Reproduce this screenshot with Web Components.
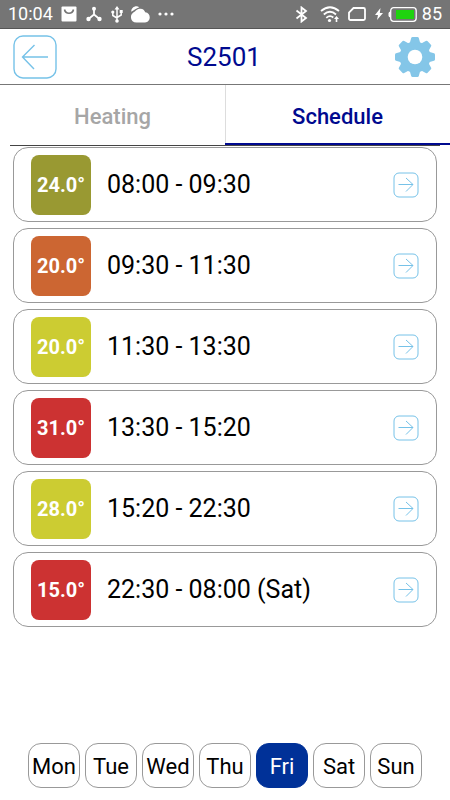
<!DOCTYPE html>
<html lang="en">
<head>
<meta charset="utf-8">
<meta name="viewport" content="width=device-width, initial-scale=1">
<title>S2501</title>
<style>
    html, body{
        height: 100%;
        margin: 0;
    }
    body{
        background: #fff;
        font-family: Roboto, "Liberation Sans", sans-serif;
    }
</style>
</head>
<body>
<thermostat-app></thermostat-app>

<script>
class BaseElement extends HTMLElement{
    constructor(){
        super();
        this.attachShadow({mode: 'open'});
    }
    connectedCallback(){
        const template = document.createElement('template');
        template.innerHTML = this.getStyle() + this.getTemplate();
        this.shadowRoot.replaceChildren(template.content.cloneNode(true));
    }
}

class StatusBar extends BaseElement{
    getTemplate(){
        return `
            <span>10:04</span>
            <svg class="mail" width="16" height="16" viewBox="0 0 16 16">
                <rect x="0.5" y="0.5" width="15" height="15" rx="1" fill="#fff"/>
                <path d="M3.5 3.5C4.5 8.5 11.5 8.5 12.5 3.5" fill="none" stroke="#757575" stroke-width="1.6"/>
            </svg>
            <svg class="node" width="16" height="16" viewBox="0 0 16 16">
                <path d="M8 2v6.500L2.500 13M8 8.500L13.500 13" fill="none" stroke="#fff" stroke-width="1.8"/>
                <circle cx="8" cy="2.800" r="2" fill="#fff"/>
                <circle cx="2.500" cy="13" r="2.200" fill="#fff"/>
                <circle cx="13.500" cy="13" r="2.200" fill="#fff"/>
            </svg>
            <svg class="usb" width="12" height="17" viewBox="0 0 12 17">
                <path d="M6 2v13M1.800 6v3.500L6 12M10.200 5v4L6 11.500" fill="none" stroke="#fff" stroke-width="1.5"/>
                <path d="M6 0l2.500 3.500h-5zM8.700 4h3v3h-3z" fill="#fff"/>
                <circle cx="1.800" cy="6" r="1.600" fill="#fff"/>
                <circle cx="6" cy="15" r="1.800" fill="#fff"/>
            </svg>
            <svg class="cloud" width="19" height="17" viewBox="0 0 19 17">
                <path d="M0.300 5.800C-0.200 2 4.500-1.300 8.300 1.200C5 2.200 3.500 4.200 0.300 5.800z" fill="#fff"/>
                <path d="M5.500 16.500C-0.500 16.500-1.500 9.500 1.800 7C4.500 5.500 5 3.500 8.500 2.800C11.500 2.300 13.500 4 14.200 6.200C20.500 6.800 20 16.500 14 16.500z" fill="#fff"/>
            </svg>
            <svg class="dots" width="18" height="4" viewBox="0 0 18 4">
                <circle cx="2" cy="2" r="1.600" fill="#fff"/>
                <circle cx="8" cy="2" r="1.600" fill="#fff"/>
                <circle cx="14" cy="2" r="1.600" fill="#fff"/>
            </svg>
            <svg class="bluetooth" width="13" height="17" viewBox="0 0 13 17">
                <path d="M1.500 4.500L11 12L6.500 15.500V1.500L11 5L1.500 12.500" fill="none" stroke="#fff" stroke-width="1.8"/>
            </svg>
            <svg class="wifi" width="20" height="17" viewBox="0 0 20 17">
                <path d="M1 5Q10-2.500 19 5M3.800 8.500Q10 3 16 8.500M6.300 11.800Q10 8.500 13.300 11.500" fill="none" stroke="#fff" stroke-width="1.800"/>
                <circle cx="9.500" cy="14.500" r="1.600" fill="#fff"/>
                <path d="M16.500 10l2.500 3h-1.700v3h-1.600v-3H14z" fill="#fff"/>
            </svg>
            <svg class="sim" width="18" height="14" viewBox="0 0 18 14">
                <path d="M5.500 1H15.500Q17 1 17 2.500V11.500Q17 13 15.500 13H2.500Q1 13 1 11.500V5.500z" fill="none" stroke="#fff" stroke-width="1.800"/>
            </svg>
            <svg class="bolt" width="8" height="12" viewBox="0 0 8 12">
                <path d="M5.500 0L0 7h3L2 12L8 5H4.800z" fill="#fff"/>
            </svg>
            <svg class="battery" width="29" height="15" viewBox="0 0 29 15">
                <rect x="2.700" y="0.700" width="25.500" height="13.600" rx="3" fill="none" stroke="#fff" stroke-width="1.300"/>
                <path d="M2.500 4.500Q0.500 4.500 0.500 6.500V8.500Q0.500 10.500 2.500 10.500z" fill="#fff"/>
                <rect x="8" y="3" width="18" height="9" fill="#1fd30f"/>
            </svg>
            <span>85</span>
        `;
    }
    getStyle(){
        return `
            <style>
                :host{
                    display: flex;
                    align-items: center;
                    height: 28px;
                    padding: 0 8px;
                    background: #757575;
                    border-bottom: 1px solid #555;
                    color: #fff;
                    font-size: 18px;
                    line-height: 28px;
                }
                svg{
                    flex: none;
                }
                .mail{ margin-left: 8px; }
                .node{ margin-left: 9px; }
                .usb{ margin-left: 9px; }
                .cloud{ margin-left: 8px; }
                .dots{ margin-left: 8px; }
                .bluetooth{ margin-left: auto; }
                .wifi{ margin-left: 12px; }
                .sim{ margin-left: 8px; }
                .bolt{ margin-left: 9px; }
                .battery{ margin: 0 5px; }
            </style>
        `;
    }
}

class AppHeader extends BaseElement{
    getTemplate(){
        return `
            <header>
                <button type="button" aria-label="Back">
                    <svg width="44" height="44" viewBox="0 0 44 44" fill="none" stroke="#76c2e8" stroke-width="1.400">
                        <rect x="1" y="1" width="42" height="42" rx="9"/>
                        <path d="M35 22H10M21.500 10L9.500 22L21 34"/>
                    </svg>
                </button>
                <h1><slot></slot></h1>
                <button type="button" aria-label="Settings">
                    <svg width="40" height="40" viewBox="-20 -20 40 40">
                        <defs>
                            <path id="tooth" d="M-5.500-13L-3.800-19Q-3.500-20-2.500-20H2.500Q3.500-20 3.800-19L5.500-13z"/>
                        </defs>
                        <g fill="#84c6e8">
                            <circle r="15.500"/>
                            <use href="#tooth"/>
                            <use href="#tooth" transform="rotate(45)"/>
                            <use href="#tooth" transform="rotate(90)"/>
                            <use href="#tooth" transform="rotate(135)"/>
                            <use href="#tooth" transform="rotate(180)"/>
                            <use href="#tooth" transform="rotate(225)"/>
                            <use href="#tooth" transform="rotate(270)"/>
                            <use href="#tooth" transform="rotate(315)"/>
                        </g>
                        <circle r="7.300" fill="#fff"/>
                    </svg>
                </button>
            </header>
        `;
    }
    getStyle(){
        return `
            <style>
                :host{
                    display: block;
                    border-bottom: 1px solid #777;
                }
                header{
                    display: grid;
                    grid-template-columns: 1fr auto 1fr;
                    align-items: center;
                    height: 55px;
                    padding: 0 15px 0 13px;
                }
                h1{
                    margin: 0;
                    color: #000a8f;
                    font-size: 26px;
                    font-weight: 400;
                    line-height: 32px;
                }
                button{
                    justify-self: start;
                    padding: 0;
                    border: 0;
                    background: none;
                }
                button:last-child{
                    justify-self: end;
                }
                svg{
                    display: block;
                }
            </style>
        `;
    }
}

class TabBar extends BaseElement{
    getTemplate(){
        return `
            <nav>
                <button type="button">Heating</button>
                <button type="button" class="active" aria-current="page">Schedule</button>
            </nav>
        `;
    }
    getStyle(){
        return `
            <style>
                :host{
                    display: block;
                }
                nav{
                    display: grid;
                    grid-template-columns: 1fr 1fr;
                }
                button{
                    height: 60px;
                    padding: 6px 0 0;
                    border: 0;
                    border-bottom: 2px solid transparent;
                    background: none;
                    color: #a6a6a6;
                    font: 500 22px/28px Roboto, "Liberation Sans", sans-serif;
                }
                button.active{
                    border-bottom-color: #000a8f;
                    box-shadow: inset 1px 0 #ddd;
                    color: #000a8f;
                }
            </style>
        `;
    }
}

class ScheduleItem extends BaseElement{
    getTemplate(){
        return `
            <strong><slot name="temp"></slot></strong>
            <span><slot name="time"></slot></span>
            <button type="button" aria-label="Edit">
                <svg width="26" height="26" viewBox="0 0 26 26" fill="none" stroke="#76c2e8">
                    <rect x="1" y="1" width="24" height="24" rx="5"/>
                    <path d="M5.500 12.500H20M13 6L20 12.500L13 19.500"/>
                </svg>
            </button>
        `;
    }
    getStyle(){
        return `
            <style>
                :host{
                    --badge-color: #999932;

                    display: flex;
                    align-items: center;
                    gap: 16px;
                    box-sizing: border-box;
                    height: 75px;
                    padding: 0 17px;
                    border: 1px solid #999;
                    border-radius: 15px;
                }
                strong{
                    width: 60px;
                    border-radius: 8px;
                    background: var(--badge-color);
                    color: #fff;
                    font-size: 20px;
                    font-weight: 700;
                    line-height: 60px;
                    text-align: center;
                }
                span{
                    flex: 1;
                    font-size: 25px;
                    line-height: 30px;
                }
                button{
                    padding: 0;
                    border: 0;
                    background: none;
                }
                svg{
                    display: block;
                }
            </style>
        `;
    }
}

class ScheduleList extends BaseElement{
    getTemplate(){
        return `
            <section>
                <slot></slot>
            </section>
        `;
    }
    getStyle(){
        return `
            <style>
                :host{
                    display: block;
                    margin: 0 10px;
                    border-top: 1px solid #444;
                }
                section{
                    display: flex;
                    flex-direction: column;
                    gap: 6px;
                    padding: 1px 3px;
                }
            </style>
        `;
    }
}

class DayPicker extends BaseElement{
    getTemplate(){
        const days = ['Mon', 'Tue', 'Wed', 'Thu', 'Fri', 'Sat', 'Sun'];
        return days.map(day => {
            const selected = day === this.getAttribute('selected');
            return `<button type="button" aria-pressed="${selected}">${day}</button>`;
        }).join('');
    }
    getStyle(){
        return `
            <style>
                :host{
                    display: flex;
                    gap: 5px;
                    padding: 0 28px 12px;
                }
                button{
                    flex: 1 1 0;
                    min-width: 0;
                    height: 45px;
                    padding: 2px 0 0;
                    border: 1px solid #999;
                    border-radius: 13px;
                    background: #fff;
                    color: #000;
                    font: 400 22px/28px Roboto, "Liberation Sans", sans-serif;
                }
                button[aria-pressed="true"]{
                    border-color: #003198;
                    background: #003198;
                    color: #fff;
                }
            </style>
        `;
    }
}

class ThermostatApp extends BaseElement{
    getTemplate(){
        const items = [
            ['24.0°', '08:00 - 09:30', '#999932'],
            ['20.0°', '09:30 - 11:30', '#cc6632'],
            ['20.0°', '11:30 - 13:30', '#cccc32'],
            ['31.0°', '13:30 - 15:20', '#cc3232'],
            ['28.0°', '15:20 - 22:30', '#cccc32'],
            ['15.0°', '22:30 - 08:00 (Sat)', '#cc3232']
        ];
        return `
            <status-bar></status-bar>
            <app-header>S2501</app-header>
            <tab-bar></tab-bar>
            <schedule-list>
                ${items.map(([temp, time, color]) => `
                    <schedule-item style="--badge-color: ${color}">
                        <span slot="temp">${temp}</span>
                        <span slot="time">${time}</span>
                    </schedule-item>
                `).join('')}
            </schedule-list>
            <day-picker selected="Fri"></day-picker>
        `;
    }
    getStyle(){
        return `
            <style>
                :host{
                    display: flex;
                    flex-direction: column;
                    min-height: 100%;
                    color: #000;
                }
                day-picker{
                    margin-top: auto;
                }
            </style>
        `;
    }
}

customElements.define('status-bar', StatusBar);
customElements.define('app-header', AppHeader);
customElements.define('tab-bar', TabBar);
customElements.define('schedule-item', ScheduleItem);
customElements.define('schedule-list', ScheduleList);
customElements.define('day-picker', DayPicker);
customElements.define('thermostat-app', ThermostatApp);
</script>
</body>
</html>
